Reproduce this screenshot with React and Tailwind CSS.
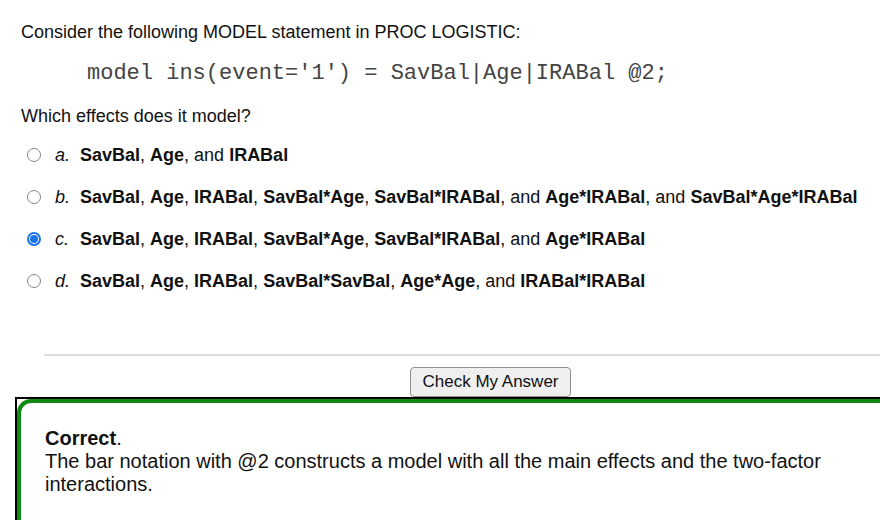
import React from "react";

const options = [
  {
    key: "a",
    parts: [["SavBal", 1], [", ", 0], ["Age", 1], [", and ", 0], ["IRABal", 1]],
  },
  {
    key: "b",
    parts: [
      ["SavBal", 1], [", ", 0], ["Age", 1], [", ", 0], ["IRABal", 1], [", ", 0],
      ["SavBal*Age", 1], [", ", 0], ["SavBal*IRABal", 1], [", and ", 0],
      ["Age*IRABal", 1], [", and ", 0], ["SavBal*Age*IRABal", 1],
    ],
  },
  {
    key: "c",
    checked: true,
    parts: [
      ["SavBal", 1], [", ", 0], ["Age", 1], [", ", 0], ["IRABal", 1], [", ", 0],
      ["SavBal*Age", 1], [", ", 0], ["SavBal*IRABal", 1], [", and ", 0],
      ["Age*IRABal", 1],
    ],
  },
  {
    key: "d",
    parts: [
      ["SavBal", 1], [", ", 0], ["Age", 1], [", ", 0], ["IRABal", 1], [", ", 0],
      ["SavBal*SavBal", 1], [", ", 0], ["Age*Age", 1], [", and ", 0],
      ["IRABal*IRABal", 1],
    ],
  },
];

const Radio = ({ checked }) =>
  checked ? (
    <span className="w-[14px] h-[14px] rounded-full border-2 border-[#1a73e8] flex items-center justify-center">
      <span className="w-[8px] h-[8px] rounded-full bg-[#1a73e8]" />
    </span>
  ) : (
    <span className="w-[14px] h-[14px] rounded-full border border-[#858585] bg-white" />
  );

export default function App() {
  return (
    <div className="w-[880px] h-[520px] overflow-hidden bg-white text-[#111] font-['Liberation_Sans',Arial,sans-serif]">
      <div className="pl-[21px] pt-[22px]">
        <p className="text-[18px] leading-[21px]">
          Consider the following MODEL statement in PROC LOGISTIC:
        </p>
        <p className="mt-[19px] ml-[66px] text-[22px] leading-[24px] text-[#444] font-['Liberation_Mono','Courier_New',monospace] whitespace-pre">
          model ins(event='1') = SavBal|Age|IRABal @2;
        </p>
        <p className="mt-[20px] text-[18px] leading-[21px]">
          Which effects does it model?
        </p>
        <div className="mt-[7px]">
          {options.map((opt) => (
            <div key={opt.key} className="h-[42px] flex items-center">
              <span className="w-[27px] pl-[6px] flex">
                <Radio checked={opt.checked} />
              </span>
              <span className="text-[18px] italic w-[32px] pl-[7px]">{opt.key}.</span>
              <span className="text-[18px] whitespace-pre">
                {opt.parts.map(([t, b], i) =>
                  b ? (
                    <b key={i} className="font-bold">{t}</b>
                  ) : (
                    <span key={i}>{t}</span>
                  )
                )}
              </span>
            </div>
          ))}
        </div>
      </div>
      <div className="mt-[52px] ml-[44px] h-[2px] bg-[#dcdde3]" />
      <div className="mt-[11px] pl-[410px]">
        <button className="w-[161px] h-[30px] rounded-[4px] border border-[#8f8f8f] bg-[#efefef] text-[17px] text-[#111]">
          Check My Answer
        </button>
      </div>
      <div className="ml-[15px] w-[900px] border-t-2 border-l-2 border-black">
        <div className="h-[140px] border-t-4 border-l-4 border-[#108a10] rounded-tl-[14px] pl-[24px] pt-[24px] text-[20px] leading-[23px]">
          <p>
            <b className="font-bold">Correct</b>.
          </p>
          <p className="w-[800px]">
            The bar notation with @2 constructs a model with all the main effects and the two-factor interactions.
          </p>
        </div>
      </div>
    </div>
  );
}
